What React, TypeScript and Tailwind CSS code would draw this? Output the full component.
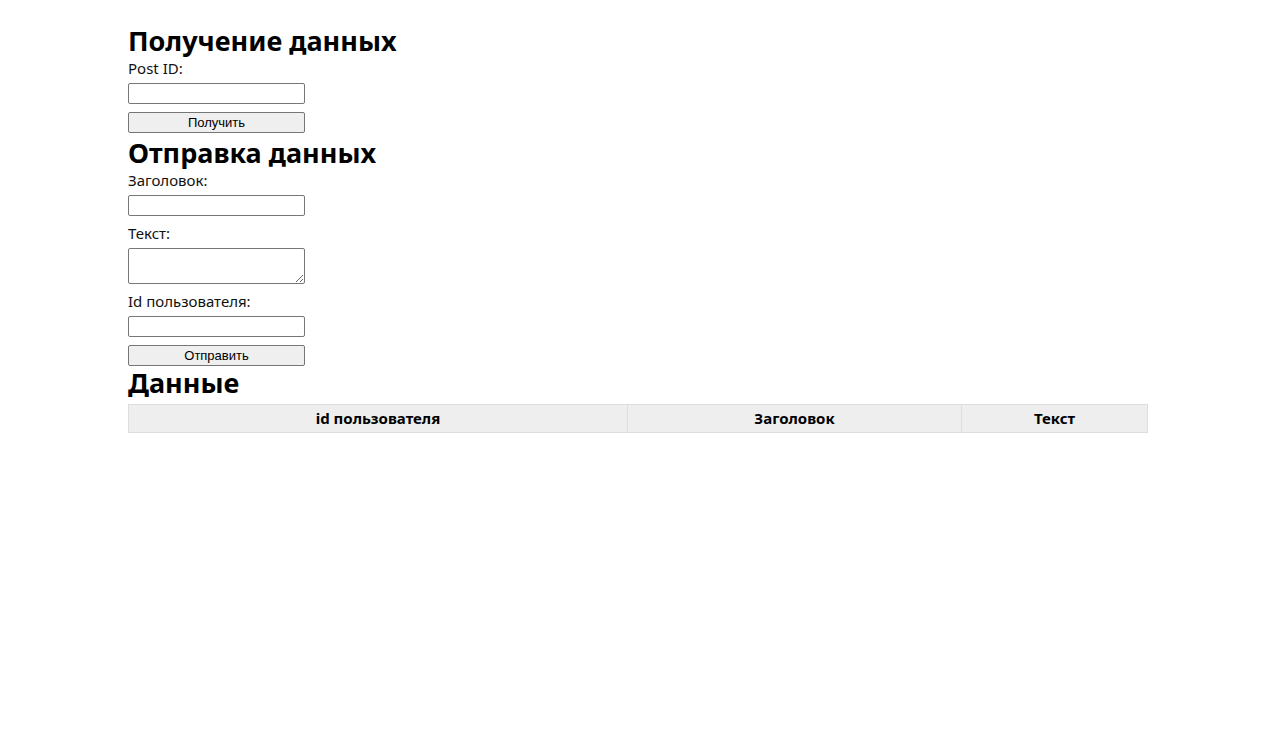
import React from 'react'

const labelCls = "block text-[15px] leading-[20px] text-[#111]"
const inputCls = "block w-[177px] h-[21px] border border-[#767676] rounded-[2px] bg-white px-1 text-[13px]"
const btnCls = "block w-[177px] h-[21px] border border-[#767676] rounded-[2px] bg-[#efefef] text-[13px] leading-[19px] text-black font-['Liberation_Sans',Arial,sans-serif]"
const headCls = "text-[27px] leading-[26px] pb-[4px] font-bold text-black"

export default function App() {
  return (
    <div className="min-h-screen bg-white font-['Noto_Sans','Open_Sans',sans-serif]">
      <div className="ml-[128px] w-[1020px] pt-[28px]">
        <h2 className={headCls}>Получение данных</h2>
        <label className={labelCls}>Post ID:</label>
        <input className={inputCls + " mt-[5px]"} type="text" />
        <button className={btnCls + " mt-[8px]"}>Получить</button>

        <h2 className={headCls + " mt-[7px]"}>Отправка данных</h2>
        <label className={labelCls}>Заголовок:</label>
        <input className={inputCls + " mt-[5px]"} type="text" />
        <label className={labelCls + " mt-[7px]"}>Текст:</label>
        <textarea className="block w-[177px] h-[36px] border border-[#767676] rounded-[2px] bg-white mt-[5px]" />
        <label className={labelCls + " mt-[7px]"}>Id пользователя:</label>
        <input className={inputCls + " mt-[5px]"} type="text" />
        <button className={btnCls + " mt-[8px]"}>Отправить</button>

        <h2 className={headCls + " mt-[4px]"}>Данные</h2>
        <table className="w-full border-collapse mt-[4px]">
          <thead>
            <tr className="bg-[#eeeeee] h-[28px]">
              <th className="w-[499px] border border-[#dddddd] text-[15px] font-bold text-black">id пользователя</th>
              <th className="w-[334px] border border-[#dddddd] text-[15px] font-bold text-black">Заголовок</th>
              <th className="border border-[#dddddd] text-[15px] font-bold text-black">Текст</th>
            </tr>
          </thead>
          <tbody></tbody>
        </table>
      </div>
    </div>
  )
}
